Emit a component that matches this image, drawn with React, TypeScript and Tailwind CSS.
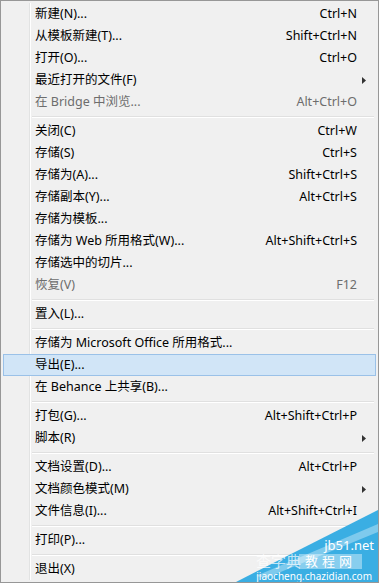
import React from 'react';

type Item =
  | { sep: true }
  | { label: string; shortcut?: string; sub?: boolean; disabled?: boolean; active?: boolean; sep?: false };

const items: Item[] = [
  { label: '新建(N)...', shortcut: 'Ctrl+N' },
  { label: '从模板新建(T)...', shortcut: 'Shift+Ctrl+N' },
  { label: '打开(O)...', shortcut: 'Ctrl+O' },
  { label: '最近打开的文件(F)', sub: true },
  { label: '在 Bridge 中浏览...', shortcut: 'Alt+Ctrl+O', disabled: true },
  { sep: true },
  { label: '关闭(C)', shortcut: 'Ctrl+W' },
  { label: '存储(S)', shortcut: 'Ctrl+S' },
  { label: '存储为(A)...', shortcut: 'Shift+Ctrl+S' },
  { label: '存储副本(Y)...', shortcut: 'Alt+Ctrl+S' },
  { label: '存储为模板...' },
  { label: '存储为 Web 所用格式(W)...', shortcut: 'Alt+Shift+Ctrl+S' },
  { label: '存储选中的切片...' },
  { label: '恢复(V)', shortcut: 'F12', disabled: true },
  { sep: true },
  { label: '置入(L)...' },
  { sep: true },
  { label: '存储为 Microsoft Office 所用格式...' },
  { label: '导出(E)...', active: true },
  { label: '在 Behance 上共享(B)...' },
  { sep: true },
  { label: '打包(G)...', shortcut: 'Alt+Shift+Ctrl+P' },
  { label: '脚本(R)', sub: true },
  { sep: true },
  { label: '文档设置(D)...', shortcut: 'Alt+Ctrl+P' },
  { label: '文档颜色模式(M)', sub: true },
  { label: '文件信息(I)...', shortcut: 'Alt+Shift+Ctrl+I' },
  { sep: true },
  { label: '打印(P)...' },
  { sep: true },
  { label: '退出(X)' },
];

function Arrow() {
  return (
    <svg width="4" height="7" viewBox="0 0 4 7" className="block">
      <path d="M0 0 L4 3.5 L0 7 Z" fill="#333" />
    </svg>
  );
}

function Watermark() {
  return (
    <div className="pointer-events-none absolute bottom-0 right-0 h-[72px] w-[142px]">
      <svg width="142" height="72" viewBox="0 0 142 72" className="absolute inset-0">
        <polygon points="0,72 142,0 142,72" fill="#3aaee3" />
        <polygon points="20,66 142,14 142,22 30,68" fill="#ffffff" opacity="0.35" />
      </svg>
      <div className="absolute right-[4px] top-[29px] text-[13px] leading-none text-white">jb51.net</div>
      <div className="absolute right-[16px] top-[44px] bg-white/40 px-[6px] text-[13px] leading-[15px] tracking-[4px] text-white">
        教程网
      </div>
      <div className="absolute bottom-[13px] left-[20px] text-[15px] leading-none text-white/70">查字典</div>
      <div className="absolute bottom-[1px] right-[6px] text-[10px] leading-none text-white">
        jiaocheng.chazidian.com
      </div>
    </div>
  );
}

export default function App() {
  return (
    <div
      className="relative h-[583px] w-[379px] overflow-hidden border border-[#979797] bg-[#f0f0f0] p-[2px] text-[12.5px] text-black"
      style={{ fontFamily: '"Noto Sans", "Noto Sans CJK SC", sans-serif' }}
    >
      {items.map((it, i) =>
        it.sep ? (
          <div key={i} className="flex h-[7px]">
            <div className="w-[27px] border-r border-r-[#e2e3e3] shadow-[1px_0_0_#fff]" />
            <div className="flex flex-1 flex-col justify-center pl-[2px] pr-[2px]">
              <div className="h-px bg-[#e0e0e0]" />
              <div className="h-px bg-white" />
            </div>
          </div>
        ) : (
          <div
            key={i}
            className={
              it.active
                ? 'flex h-[22px] items-center border border-[#9ac1e8] bg-[#d1e5f7]'
                : 'flex h-[22px] items-center'
            }
          >
            <div
              className={
                it.active
                  ? 'h-full w-[26px]'
                  : 'h-full w-[27px] border-r border-r-[#e2e3e3] shadow-[1px_0_0_#fff]'
              }
            />
            <div
              className={
                it.disabled
                  ? 'flex-1 pl-[5px] leading-none text-[#6d6d6d]'
                  : 'flex-1 pl-[5px] leading-none'
              }
            >
              {it.label}
            </div>
            {it.shortcut && (
              <div className={it.disabled ? 'pr-[19px] leading-none text-[#6d6d6d]' : 'pr-[19px] leading-none'}>
                {it.shortcut}
              </div>
            )}
            {it.sub && (
              <div className="pr-[10px]">
                <Arrow />
              </div>
            )}
          </div>
        )
      )}
      <Watermark />
    </div>
  );
}
